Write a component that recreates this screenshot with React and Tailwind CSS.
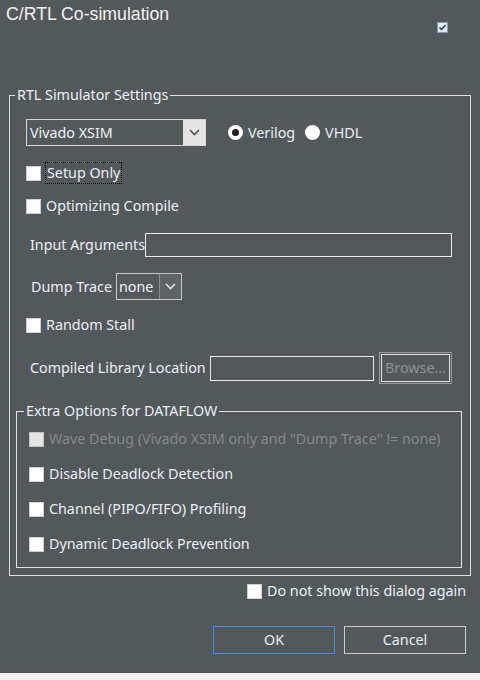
import React from "react";

const UI = { fontFamily: '"Noto Sans", "Open Sans", sans-serif' };

function Check({ disabled }) {
  return (
    <span
      className={
        disabled
          ? "w-[15px] h-[15px] shrink-0 bg-[#e4e4e4] border border-[#c2c2c2]"
          : "w-[15px] h-[15px] shrink-0 bg-white border border-[#cfcfcf]"
      }
    />
  );
}

function CheckRow({ label, disabled, focus }) {
  return (
    <div className="h-[22px] flex items-center whitespace-nowrap">
      <Check disabled={disabled} />
      <span
        className={
          focus
            ? "ml-[4px] px-[1px] h-[22px] leading-[20px] border border-dotted border-black text-[#e9f0f6]"
            : disabled
            ? "ml-[5px] text-[#85898c]"
            : "ml-[5px] text-[#e9f0f6]"
        }
      >
        {label}
      </span>
    </div>
  );
}

function Chevron({ color }) {
  return (
    <svg width="11" height="7" viewBox="0 0 11 7">
      <path d="M1 1 L5.5 5.5 L10 1" fill="none" stroke={color} strokeWidth="1.6" />
    </svg>
  );
}

export default function App() {
  return (
    <div className="w-[480px] h-[680px] bg-[#f2f2f2] text-[14.3px]" style={UI}>
      <div className="h-[673px] bg-[#53585b] flex flex-col">
        {/* header */}
        <div className="flex items-start justify-between pl-[6px] pr-[32px] h-[33px]">
          <div
            className="mt-[4px] leading-[20px] text-[17.7px] text-[#f2f2f2] whitespace-nowrap"
            style={{ fontFamily: '"Liberation Sans", Arial, sans-serif' }}
          >
            C/RTL Co-simulation
          </div>
          <svg className="mt-[22px]" width="11" height="11" viewBox="0 0 11 11">
            <rect x="0.5" y="0.5" width="10" height="10" fill="#e3e9f1" stroke="#8a9bb5" />
            <path d="M2.5 5.5 L4.5 7.5 L8.5 3" fill="none" stroke="#2a3a5c" strokeWidth="1.5" />
          </svg>
        </div>

        {/* RTL Simulator Settings */}
        <fieldset className="mt-[52px] ml-[9px] w-[462px] border border-[#e2e2e2] pb-[7px]">
          <legend className="ml-[5px] px-[2px] leading-[20px] text-[#e9f0f6] whitespace-nowrap">
            RTL Simulator Settings
          </legend>
          <div className="pl-[16px] flex flex-col">
            {/* simulator combo + radios */}
            <div className="mt-[14px] h-[27px] flex items-center whitespace-nowrap">
              <div className="w-[180px] h-[27px] shrink-0 flex border border-[#d6d6d6]">
                <div className="flex-1 flex items-center pl-[3px] text-[#eef3f8]">Vivado XSIM</div>
                <div className="w-[22px] bg-[#e3e3e3] flex items-center justify-center">
                  <Chevron color="#505050" />
                </div>
              </div>
              <span className="ml-[22px] w-[15px] h-[15px] shrink-0 rounded-full bg-white flex items-center justify-center">
                <span className="w-[7px] h-[7px] rounded-full bg-[#1b1b1b]" />
              </span>
              <span className="ml-[5px] text-[#e9f0f6]">Verilog</span>
              <span className="ml-[10px] w-[15px] h-[15px] shrink-0 rounded-full bg-white" />
              <span className="ml-[5px] text-[#e9f0f6]">VHDL</span>
            </div>

            <div className="mt-[16px]">
              <CheckRow label="Setup Only" focus />
            </div>
            <div className="mt-[11px]">
              <CheckRow label="Optimizing Compile" />
            </div>

            {/* Input Arguments */}
            <div className="mt-[16px] h-[24px] flex items-center whitespace-nowrap">
              <span className="w-[119px] shrink-0 pl-[4px] text-[#e9f0f6]">Input Arguments</span>
              <div className="w-[307px] h-[24px] shrink-0 border border-[#ececec]" />
            </div>

            {/* Dump Trace */}
            <div className="mt-[16px] h-[27px] flex items-center whitespace-nowrap">
              <span className="w-[90px] shrink-0 pl-[5px] text-[#e9f0f6]">Dump Trace</span>
              <div className="w-[66px] h-[27px] shrink-0 flex border border-[#c9c9c9]">
                <div className="flex-1 flex items-center pl-[2px] text-[#eef3f8]">none</div>
                <div className="w-[22px] bg-[#5e6366] border-l border-[#8a8e91] flex items-center justify-center">
                  <Chevron color="#e6e6e6" />
                </div>
              </div>
            </div>

            <div className="mt-[14px]">
              <CheckRow label="Random Stall" />
            </div>

            {/* Compiled Library Location */}
            <div className="mt-[16px] h-[32px] flex items-center whitespace-nowrap">
              <span className="w-[184px] shrink-0 pl-[4px] text-[#e9f0f6]">Compiled Library Location</span>
              <div className="w-[164px] h-[25px] shrink-0 border border-[#ececec]" />
              <div className="ml-[5px] w-[73px] h-[32px] shrink-0 border border-[#9a9a9a] p-[1px]">
                <div className="w-full h-full border border-[#e6e6e6] flex items-center justify-center text-[#8b9094]">
                  Browse...
                </div>
              </div>
            </div>
          </div>

          {/* Extra Options for DATAFLOW */}
          <fieldset className="mt-[17px] ml-[6px] w-[446px] border border-[#e2e2e2] pb-[12px]">
            <legend className="ml-[7px] px-[2px] leading-[20px] text-[#e9f0f6] whitespace-nowrap">
              Extra Options for DATAFLOW
            </legend>
            <div className="pl-[12px] flex flex-col">
              <div className="mt-[7px]">
                <CheckRow label={'Wave Debug (Vivado XSIM only and "Dump Trace" != none)'} disabled />
              </div>
              <div className="mt-[13px]">
                <CheckRow label="Disable Deadlock Detection" />
              </div>
              <div className="mt-[13px]">
                <CheckRow label="Channel (PIPO/FIFO) Profiling" />
              </div>
              <div className="mt-[13px]">
                <CheckRow label="Dynamic Deadlock Prevention" />
              </div>
            </div>
          </fieldset>
        </fieldset>

        {/* Do not show */}
        <div className="mt-[4px] ml-[247px]">
          <CheckRow label="Do not show this dialog again" />
        </div>

        {/* Buttons */}
        <div className="mt-[24px] flex justify-end gap-[9px] pr-[14px]">
          <button className="w-[122px] h-[28px] border border-[#3d8fe3] text-[#e9f0f6]">OK</button>
          <button className="w-[122px] h-[28px] border border-[#cdcdcd] text-[#e9f0f6]">Cancel</button>
        </div>
      </div>
    </div>
  );
}
